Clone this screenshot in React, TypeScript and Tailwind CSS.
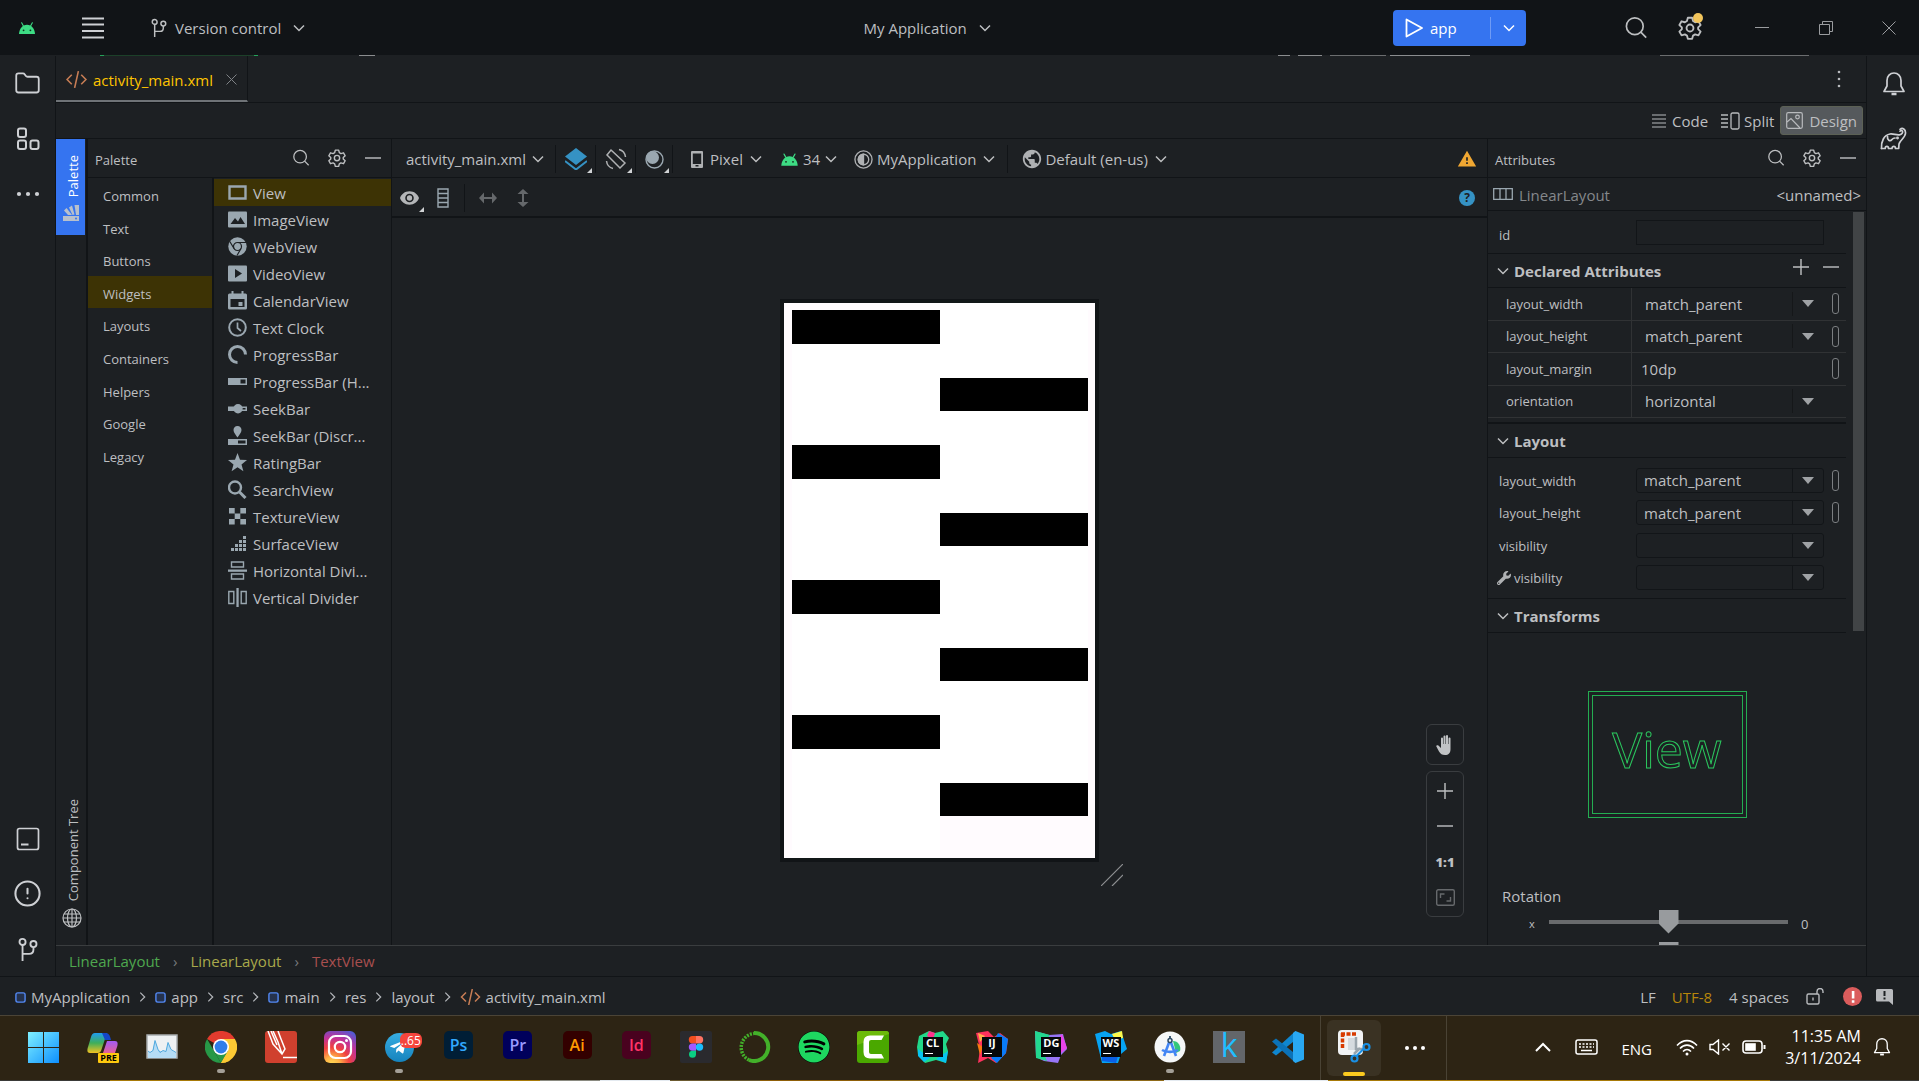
import type { ReactNode } from "react";
import { Folder, CircleAlert } from "lucide-react";
import { MdPublic, MdWarning } from "react-icons/md";
import { FaSpotify, FaWrench, FaTelegramPlane } from "react-icons/fa";

/* ---------- shared icons ---------- */

function Chevron({ className = "w-3 h-3" }: { className?: string }) {
  return (
    <svg viewBox="0 0 12 12" className={className + " shrink-0"} fill="none" stroke="currentColor" strokeWidth="1.5">
      <path d="M1 3.5 6 8.5 11 3.5" />
    </svg>
  );
}

function ChevronRight() {
  return (
    <svg viewBox="0 0 8 12" className="h-3 w-[7px] shrink-0" fill="none" stroke="#b4b7bb" strokeWidth="1.4">
      <path d="M1.5 1 6.5 6 1.5 11" />
    </svg>
  );
}

function Android({ className = "w-4 h-3" }: { className?: string }) {
  return (
    <svg viewBox="0 0 18 13" className={className + " shrink-0"}>
      <path d="M3.2.8 5 4M14.8.8 13 4" stroke="#3ddc84" strokeWidth="1.2" strokeLinecap="round" />
      <path d="M.3 13C.6 7.500 4 3 9 3s8.400 4.500 8.700 10Z" fill="#3ddc84" />
      <circle cx="5.300" cy="9" r="1" fill="#15301f" />
      <circle cx="12.700" cy="9" r="1" fill="#15301f" />
    </svg>
  );
}

function Gear({ className = "w-5 h-5" }: { className?: string }) {
  return (
    <svg viewBox="0 0 24 24" className={className + " shrink-0"} fill="none" stroke="currentColor" strokeWidth="1.7" strokeLinejoin="round">
      <path d="M10 2.500h4l.8 3.100 1.900 1.100 3.100-.9 2 3.500-2.300 2.200v1.600l2.300 2.200-2 3.500-3.100-.9-1.900 1.100-.8 3h-4l-.8-3-1.900-1.100-3.100.9-2-3.500 2.300-2.200v-1.600L2.200 9.300l2-3.500 3.100.9 1.900-1.100z" />
      <circle cx="12" cy="12" r="3.200" />
    </svg>
  );
}

function Magnifier({ className = "w-5 h-5" }: { className?: string }) {
  return (
    <svg viewBox="0 0 20 20" className={className + " shrink-0"} fill="none" stroke="currentColor" strokeWidth="1.4">
      <circle cx="9" cy="8.500" r="7" />
      <path d="m14 13.500 4.500 4.500" />
    </svg>
  );
}

function Branch({ className = "w-4 h-5" }: { className?: string }) {
  return (
    <svg viewBox="0 0 18 22" className={className + " shrink-0"} fill="none" stroke="currentColor" strokeWidth="1.7">
      <circle cx="4" cy="4.500" r="2.800" />
      <circle cx="14" cy="6.500" r="2.800" />
      <path d="M4 7.300V22M14 9.300v2.200c0 2.500-1.500 4-4 4H4" />
    </svg>
  );
}

function Minus() {
  return (
    <svg viewBox="0 0 18 18" className="size-4" stroke="currentColor" strokeWidth="1.6">
      <path d="M0 9h18" />
    </svg>
  );
}

function Plus() {
  return (
    <svg viewBox="0 0 18 18" className="size-4" stroke="currentColor" strokeWidth="1.6">
      <path d="M0 9h18M9 0v18" />
    </svg>
  );
}

function XmlIcon({ className = "w-5 h-4" }: { className?: string }) {
  return (
    <svg viewBox="0 0 20 16" className={className + " shrink-0"} fill="none" stroke="#c77d55" strokeWidth="1.5">
      <path d="M5.500 3.500 1 8l4.500 4.500M14.500 3.500 19 8l-4.500 4.500M11.800 0 8.200 16" />
    </svg>
  );
}

function Bell({ className = "w-6 h-7" }: { className?: string }) {
  return (
    <svg viewBox="0 0 24 26" className={className + " shrink-0"} fill="none" stroke="currentColor" strokeWidth="1.7" strokeLinejoin="round">
      <path d="M5 9.500C5 5 8 2 12 2s7 3 7 7.500V15l3 5.500H2L5 15z" />
      <path d="M9.500 23h5" strokeWidth="2.500" />
    </svg>
  );
}

function Corner() {
  return (
    <svg viewBox="0 0 5 5" className="size-[5px] self-end" fill="#d0d2d4">
      <path d="M5 0v5H0z" />
    </svg>
  );
}

function Sep() {
  return <span className="h-7 w-px bg-[#111417]" />;
}

/* ---------- title bar ---------- */

function TitleBar() {
  return (
    <header className="grid h-[55px] grid-cols-[45%_1fr_auto] items-center bg-[#111417]">
      <div className="flex items-center pl-[18px]">
        <Android className="h-3 w-[18px]" />
        <button aria-label="Main menu" className="ml-[46px]">
          <svg viewBox="0 0 22 22" className="size-[22px]" stroke="#ced0d4" strokeWidth="1.8">
            <path d="M0 1.500h22M0 7.500h22M0 14h22M0 20.500h22" />
          </svg>
        </button>
        <button className="ml-[47px] flex items-center">
          <Branch className="h-[19px] w-4" />
          <span className="ml-2">Version control</span>
          <Chevron className="ml-3 size-3" />
        </button>
      </div>
      <button className="flex items-center justify-self-start">
        My Application
        <Chevron className="ml-3 size-3" />
      </button>
      <div className="flex items-center">
        <div className="flex h-9 w-[133px] items-center rounded bg-[#3574f0] text-white">
          <button className="flex flex-1 items-center pl-3">
            <svg viewBox="0 0 18 20" className="h-5 w-[18px]" fill="none" stroke="white" strokeWidth="1.8" strokeLinejoin="round">
              <path d="M1.500 1.500 17 10 1.500 18.500z" />
            </svg>
            <span className="ml-[7px]">app</span>
          </button>
          <span className="h-[22px] w-px bg-[#6f9bf5]" />
          <button aria-label="Run options" className="flex h-full w-[35px] items-center justify-center">
            <Chevron className="size-3" />
          </button>
        </div>
        <button aria-label="Search everywhere" className="ml-[98px]">
          <Magnifier className="size-6" />
        </button>
        <button aria-label="Settings" className="relative ml-[29px]">
          <Gear className="size-[26px]" />
          <span className="absolute -top-[2px] right-0 size-[10px] rounded-full bg-[#f2c55c]" />
        </button>
        <button aria-label="Minimize" className="ml-[52px] h-px w-[14px] bg-[#9a9c9f]" />
        <button aria-label="Restore" className="ml-[50px]">
          <svg viewBox="0 0 14 14" className="size-[14px]" fill="none" stroke="#9a9c9f">
            <path d="M.5 3.500h10v10H.5zM3.500 3.500v-3h10v10h-3" />
          </svg>
        </button>
        <button aria-label="Close" className="mr-[23px] ml-[49px]">
          <svg viewBox="0 0 14 14" className="size-[14px]" stroke="#9a9c9f">
            <path d="M.5.5l13 13M13.500.5l-13 13" />
          </svg>
        </button>
      </div>
    </header>
  );
}

/* Sliver of the run toolbar showing below the title bar */
function ToolbarSliver() {
  return (
    <div className="flex h-px bg-[#1d2023]">
      <span className="ml-[100px] w-1 bg-[#25a25a]" />
      <span className="w-[150px] bg-[#1c4029]" />
      <span className="w-1 bg-[#25a25a]" />
      <span className="ml-[101px] w-4 bg-[#8b8d8f]" />
      <span className="mr-2 ml-auto w-3 bg-[#8b8d8f]" />
      <span className="mr-2 w-6 bg-[#8b8d8f]" />
      <span className="mr-1 w-14 bg-[#6b6d6f]" />
      <span className="mr-[190px] w-20 bg-[#8b8d8f]" />
      <span className="mr-[110px] w-[149px] bg-[#6b6d6f]" />
    </div>
  );
}

/* ---------- side stripes ---------- */

function StripeButton({ label, children }: { label: string; children: ReactNode }) {
  return (
    <button aria-label={label} className="flex h-[55px] w-full items-center justify-center">
      {children}
    </button>
  );
}

function LeftStripe() {
  return (
    <nav className="flex w-14 shrink-0 flex-col border-r border-[#111417] text-[#ced0d4]">
      <StripeButton label="Project">
        <Folder className="size-[27px]" strokeWidth={1.6} />
      </StripeButton>
      <StripeButton label="Resource manager">
        <svg viewBox="0 0 24 24" className="size-6" fill="none" stroke="currentColor" strokeWidth="2">
          <rect x="2" y="1.500" width="8" height="8.500" rx="2" />
          <rect x="2" y="13.500" width="8" height="8.500" rx="2" />
          <rect x="14.500" y="13.500" width="8" height="8.500" rx="2" />
        </svg>
      </StripeButton>
      <StripeButton label="More tool windows">
        <svg viewBox="0 0 24 6" className="h-[6px] w-6" fill="currentColor">
          <circle cx="3" cy="3" r="2.100" />
          <circle cx="12" cy="3" r="2.100" />
          <circle cx="21" cy="3" r="2.100" />
        </svg>
      </StripeButton>
      <span className="flex-1" />
      <StripeButton label="Terminal">
        <svg viewBox="0 0 24 24" className="size-6" fill="none" stroke="currentColor" strokeWidth="1.700">
          <rect x="1.500" y="1.500" width="21" height="21" rx="2" />
          <path d="M5 17.500h7.500" strokeWidth="2" />
        </svg>
      </StripeButton>
      <StripeButton label="Problems">
        <CircleAlert className="size-[29px]" strokeWidth={1.7} />
      </StripeButton>
      <StripeButton label="Version control">
        <Branch className="h-6 w-[22px]" />
      </StripeButton>
    </nav>
  );
}

function RightStripe() {
  return (
    <nav className="flex w-[53px] shrink-0 flex-col border-l border-[#111417] pl-px text-[#ced0d4]">
      <StripeButton label="Notifications">
        <Bell className="h-[26px] w-6" />
      </StripeButton>
      <StripeButton label="Gradle">
        <svg viewBox="0 0 27 24" className="h-6 w-[27px]" fill="none" stroke="currentColor" strokeWidth="1.700" strokeLinejoin="round" strokeLinecap="round">
          <path d="M1.500 21.500C1 14.500 4 8 10 7c3.500-.5 6 1.300 9.500.8 2.500-.4 3.800-2.300 2.800-3.700-.7-1-2-.7-2.300.1" />
          <path d="M20 2.300c2.500-2 5.800-.3 5.500 4-.3 4.500-5.500 7-6.500 10.700l-.3 4.500h-3.200c0-2.800-3.500-2.800-3.500 0H8.500c0-2.800-3.300-2.800-3.300 0H1.500" />
          <path d="M7.500 9.500c-.5 3.500 2.500 5.500 4.500 3 .8-1 1.500-1.500 3-1.500" />
          <circle cx="17.500" cy="11" r=".6" fill="currentColor" />
        </svg>
      </StripeButton>
    </nav>
  );
}

/* ---------- editor header ---------- */

function EditorHeader() {
  return (
    <>
      <div className="flex h-[47px] border-b border-[#111417]">
        <div className="flex w-48 items-center border-r border-b-2 border-r-[#111417] border-b-[#6f7377] pt-[2px] pl-[10px]">
          <XmlIcon className="h-[17px] w-[21px]" />
          <span className="ml-[6px] pt-px text-[#ffc400]">activity_main.xml</span>
          <button aria-label="Close tab" className="ml-[13px]">
            <svg viewBox="0 0 11 11" className="size-[11px]" stroke="#7f8286">
              <path d="M.5.5l10 10M10.500.5l-10 10" />
            </svg>
          </button>
        </div>
        <button aria-label="Tab options" className="mr-[25px] ml-auto">
          <svg viewBox="0 0 4 18" className="h-[18px] w-1" fill="#b8babd">
            <circle cx="2" cy="2" r="1.300" />
            <circle cx="2" cy="9" r="1.300" />
            <circle cx="2" cy="16" r="1.300" />
          </svg>
        </button>
      </div>
      <div className="flex h-9 items-center justify-end border-b border-[#111417] pr-[3px]">
        <button className="flex items-center gap-[6px]">
          <svg viewBox="0 0 14 14" className="size-[14px]" stroke="#b8babd" strokeWidth="1.200">
            <path d="M0 1h14M0 5h14M0 9h14M0 13h14" />
          </svg>
          Code
        </button>
        <button className="ml-[13px] flex items-center gap-1">
          <svg viewBox="0 0 19 18" className="h-[18px] w-[19px]" fill="none" stroke="#b8babd" strokeWidth="1.300">
            <path d="M0 3h7M0 7h7M0 11h7M0 15h7" />
            <rect x="10" y="1" width="8" height="16" rx="1.500" />
          </svg>
          Split
        </button>
        <button className="ml-[6px] flex h-[29px] items-center gap-[6px] rounded-[3px] border border-[#5c6155] bg-[#55595c] px-[5px]">
          <svg viewBox="0 0 17 17" className="size-[17px]" fill="none" stroke="#b8babd" strokeWidth="1.200">
            <rect x=".7" y=".7" width="15.600" height="15.600" rx="1.500" />
            <circle cx="11.500" cy="5" r="1.800" />
            <path d="m1 10 4-3.500 9 9.500" />
          </svg>
          Design
        </button>
      </div>
    </>
  );
}

/* ---------- palette ---------- */

function PanelHeader({ title }: { title: string }) {
  return (
    <div className="flex h-[39px] shrink-0 items-center border-b border-[#111417]">
      <h2 className="flex-1 pt-[3px] pl-[7px] text-[13px]">{title}</h2>
      <button aria-label={"Search " + title} className="flex w-9 justify-center">
        <Magnifier className="size-[18px]" />
      </button>
      <button aria-label={title + " settings"} className="flex w-9 justify-center">
        <Gear className="size-5" />
      </button>
      <button aria-label={"Hide " + title} className="flex w-9 justify-center">
        <Minus />
      </button>
    </div>
  );
}

const categories = ["Common", "Text", "Buttons", "Widgets", "Layouts", "Containers", "Helpers", "Google", "Legacy"];

const widgets: { name: string; icon: ReactNode }[] = [
  { name: "View", icon: <path d="M1.500 3.500h16v12h-16z" fill="none" stroke="#9aa7b0" strokeWidth="2.400" /> },
  {
    name: "ImageView",
    icon: (
      <>
        <rect y="1.500" width="19" height="16" rx="1" />
        <path d="M2.500 14 7 8l3 3.500L12.500 7l4.500 7z" fill="#1d2023" />
      </>
    ),
  },
  {
    name: "WebView",
    icon: (
      <>
        <circle cx="9.500" cy="9.500" r="9.200" />
        <g stroke="#1d2023" fill="none" strokeWidth="1.200">
          <circle cx="9.500" cy="9.500" r="4" />
          <path d="M9.500 5.500H18M6 11.500 1.800 4.500M13 11.500 9 18.500" />
        </g>
      </>
    ),
  },
  {
    name: "VideoView",
    icon: (
      <>
        <rect y="1.500" width="19" height="16" rx="1" />
        <path d="M7 5v9l7-4.500z" fill="#1d2023" />
      </>
    ),
  },
  {
    name: "CalendarView",
    icon: (
      <>
        <path d="M1.500 2.500h16q1.500 0 1.500 1.500v13q0 1.500-1.500 1.500h-16Q0 18.500 0 17V4q0-1.500 1.500-1.500zM2.500 8v8h14V8z" fillRule="evenodd" />
        <path d="M3.500 0h2v4h-2zM13.500 0h2v4h-2zM10.500 11h4v4h-4z" />
      </>
    ),
  },
  {
    name: "Text Clock",
    icon: (
      <g fill="none" stroke="#9aa7b0" strokeWidth="2">
        <circle cx="9.500" cy="9.500" r="8.300" />
        <path d="M9.500 4.500v5.500l3.500 3" strokeWidth="1.700" />
      </g>
    ),
  },
  { name: "ProgressBar", icon: <path d="M9.500 17.500A8 8 0 1 1 17.500 9.500" fill="none" stroke="#9aa7b0" strokeWidth="3" /> },
  { name: "ProgressBar (H...", icon: <path d="M0 6h19v7H0zM12.500 7.500v4h5v-4z" fillRule="evenodd" /> },
  {
    name: "SeekBar",
    icon: (
      <>
        <path d="M0 7.500h10v4.500H0zM10 7.500h9v4.500h-9zM13 9v1.500h4.500V9z" fillRule="evenodd" />
        <circle cx="10" cy="9.700" r="4.700" />
      </>
    ),
  },
  {
    name: "SeekBar (Discr...",
    icon: (
      <>
        <path d="M9.500 0c2.500 0 4 1.800 4 4 0 2.500-2.500 5-4 7.500C8 9 5.500 6.500 5.500 4c0-2.200 1.500-4 4-4z" />
        <path d="M0 13h19v6H0zM10 14.500v3h7.500v-3z" fillRule="evenodd" />
      </>
    ),
  },
  { name: "RatingBar", icon: <path d="m9.500 0 2.500 6.700 7 .3-5.500 4.400 1.900 6.900-5.900-4-5.900 4 1.900-6.900L0 7l7-.3z" /> },
  {
    name: "SearchView",
    icon: (
      <g fill="none" stroke="#9aa7b0" strokeWidth="2.400">
        <circle cx="7" cy="7.500" r="6" />
        <path d="m11.500 12 6 6" strokeWidth="3" />
      </g>
    ),
  },
  { name: "TextureView", icon: <path d="M1 1h5.700v5.500H1zM12.300 1H18v5.500h-5.700zM6.700 6.500h5.600V12H6.700zM1 12h5.700v5.500H1zM12.300 12H18v5.500h-5.700z" /> },
  {
    name: "SurfaceView",
    icon: <path d="M15 2h3v3h-3zM15 6h3v3h-3zM11 6h3v3h-3zM15 10h3v3h-3zM11 10h3v3h-3zM7 10h3v3H7zM15 14h3v3h-3zM11 14h3v3h-3zM7 14h3v3H7zM3 14h3v3H3z" />,
  },
  {
    name: "Horizontal Divi...",
    icon: (
      <>
        <path d="M3.500 1h12v5h-12zM3.500 13h12v5h-12z" fill="none" stroke="#9aa7b0" strokeWidth="1.400" />
        <path d="M0 8.500h19v2.300H0z" />
      </>
    ),
  },
  {
    name: "Vertical Divider",
    icon: (
      <>
        <path d="M.8 3.500h5v12h-5zM13.200 3.500h5v12h-5z" fill="none" stroke="#9aa7b0" strokeWidth="1.400" />
        <path d="M8.400 0h2.300v19H8.400z" />
      </>
    ),
  },
];

function Palette() {
  return (
    <>
      <div className="flex w-8 shrink-0 flex-col items-start border-r-2 border-[#111417]">
        <button className="flex h-24 w-[29px] flex-col items-center justify-end gap-2 bg-[#3574f0] pb-[14px] pl-1 text-white">
          <span className="rotate-180 text-[13px] leading-4 [writing-mode:vertical-rl]">Palette</span>
          <svg viewBox="0 0 16 16" className="mr-1 size-4" fill="#b8c0cc">
            <path d="M0 11h16v5H0z" />
            <path d="M1 5.500 3.500 3 9 10H5z" />
            <path d="M6 2.500 9 .500 11.500 9.500 9.500 10z" />
            <path d="M11.500 0H16v10h-3z" />
            <circle cx="13" cy="13.500" r="1" fill="#3574f0" />
          </svg>
        </button>
        <span className="flex-1" />
        <button className="mb-[17px] flex w-[29px] flex-col items-center gap-[7px] pl-1">
          <span className="rotate-180 text-[13px] leading-4 [writing-mode:vertical-rl]">Component Tree</span>
          <svg viewBox="0 0 20 20" className="mr-[2px] size-5" fill="none" stroke="currentColor" strokeWidth="1.200">
            <circle cx="10" cy="10" r="9" />
            <ellipse cx="10" cy="10" rx="4.500" ry="9" />
            <path d="M10 1v18M2 6h16M1 10h18M2 14h16" />
          </svg>
        </button>
      </div>
      <section className="flex w-[304px] shrink-0 flex-col border-r border-[#111417]">
        <PanelHeader title="Palette" />
        <div className="flex flex-1">
          <div className="w-[126px] shrink-0 border-r-2 border-[#111417] text-[13px]">
            <ul className="grid h-[293px] grid-rows-9">
              {categories.map((c) => (
                <li key={c} className={c === "Widgets" ? "bg-[#3d3305]" : ""}>
                  <button className="h-full w-full pt-1 pl-[15px] text-left">{c}</button>
                </li>
              ))}
            </ul>
          </div>
          <ul className="flex-1 pt-px">
            {widgets.map((w) => (
              <li key={w.name}>
                <button className={"flex h-[27px] w-full items-center gap-[6px] pl-[14px] " + (w.name === "View" ? "bg-[#3d3305]" : "")}>
                  <svg viewBox="0 0 19 19" className="size-[19px] shrink-0" fill="#9aa7b0">
                    {w.icon}
                  </svg>
                  <span className="whitespace-nowrap">{w.name}</span>
                </button>
              </li>
            ))}
          </ul>
        </div>
      </section>
    </>
  );
}

/* ---------- design surface ---------- */

function SurfaceToolbar() {
  return (
    <div className="flex h-[39px] shrink-0 items-center border-b border-[#111417] pt-[2px] pl-[14px]">
      <button className="flex items-center gap-[6px]">
        activity_main.xml
        <Chevron />
      </button>
      <span className="w-[11px]" />
      <Sep />
      <button aria-label="Design surface mode" className="ml-[9px] flex h-7 items-center">
        <svg viewBox="0 0 22 22" className="size-[22px]" fill="#3592c4">
          <path d="M11 0 22 8.500 11 17 0 8.500z" />
          <path d="M0 13 11 21.500 22 13" fill="none" stroke="#3592c4" strokeWidth="2" />
        </svg>
        <Corner />
      </button>
      <span className="w-[3px]" />
      <Sep />
      <button aria-label="Orientation" className="ml-[9px] flex h-7 items-center">
        <svg viewBox="0 0 22 22" className="size-[22px]" fill="none" stroke="#afb1b3" strokeWidth="1.500">
          <path d="m6 2 14 13-5 5L2 7zM14 1.500c4 1 6 3.500 6.500 7.500M8 20.500c-4-1-6-3.500-6.500-7.500" />
        </svg>
        <Corner />
      </button>
      <span className="w-[3px]" />
      <Sep />
      <button aria-label="Night mode" className="ml-[9px] flex h-7 items-center">
        <svg viewBox="0 0 19 19" className="size-[19px]">
          <circle cx="9.500" cy="9.500" r="8.500" fill="none" stroke="#9aa7b0" strokeWidth="1.400" />
          <circle cx="7.500" cy="7.500" r="6.500" fill="#9aa7b0" />
        </svg>
        <Corner />
      </button>
      <span className="w-[3px]" />
      <Sep />
      <button className="ml-[18px] flex items-center">
        <svg viewBox="0 0 12 17" className="h-[17px] w-3" fill="#afb1b3">
          <path d="M1 0h10q1 0 1 1v15q0 1-1 1H1q-1 0-1-1V1q0-1 1-1zM1.800 2.500V13h8.400V2.500zM4.500 14v1.500h3V14z" fillRule="evenodd" />
        </svg>
        <span className="mx-[7px]">Pixel</span>
        <Chevron />
      </button>
      <button className="ml-[19px] flex items-center">
        <Android className="h-[13px] w-[17px]" />
        <span className="mx-[5px]">34</span>
        <Chevron />
      </button>
      <button className="ml-[17px] flex items-center">
        <svg viewBox="0 0 20 20" className="size-[19px]" fill="none" stroke="#afb1b3" strokeWidth="1.400">
          <circle cx="10" cy="10" r="9" />
          <circle cx="10" cy="10" r="5.500" />
          <path d="M10 4.500a5.500 5.500 0 0 0 0 11z" fill="#afb1b3" />
        </svg>
        <span className="mr-[7px] ml-1">MyApplication</span>
        <Chevron />
      </button>
      <span className="w-3" />
      <Sep />
      <button className="ml-[13px] flex items-center">
        <MdPublic className="size-[22px] text-[#afb1b3]" />
        <span className="mr-[7px] ml-[2px]">Default (en-us)</span>
        <Chevron />
      </button>
      <MdWarning className="mr-[10px] ml-auto size-5 text-[#f0a732]" />
    </div>
  );
}

function SurfaceTools() {
  return (
    <div className="flex h-10 shrink-0 items-center border-b-2 border-[#111417] pt-[2px] pl-2">
      <button aria-label="View options" className="flex h-7 items-center">
        <svg viewBox="0 0 20 16" className="h-4 w-[19px]" fill="#b4b6b8">
          <path d="M10 1c5 0 8.500 3 10 7-1.500 4-5 7-10 7S1.500 12 0 8c1.500-4 5-7 10-7zm0 2.500a4.500 4.500 0 1 0 0 9 4.500 4.500 0 0 0 0-9z" fillRule="evenodd" />
          <circle cx="10" cy="8" r="2.800" />
        </svg>
        <Corner />
      </button>
      <svg viewBox="0 0 12 20" className="ml-[13px] h-5 w-3" fill="none" stroke="#9aa7b0" strokeWidth="1.400">
        <path d="M1 1h10v18H1zM1 5.500h10M1 14.500h10M1 10h10" />
      </svg>
      <span className="w-[15px]" />
      <Sep />
      <svg viewBox="0 0 18 12" className="ml-[14px] h-3 w-[18px]" fill="#65686b">
        <path d="M0 6 5 .5V5h8V.5L18 6l-5 5.500V7H5v4.500z" />
      </svg>
      <svg viewBox="0 0 12 18" className="ml-5 h-[18px] w-3" fill="#65686b">
        <path d="M6 0l5.500 5H7v8h4.500L6 18 .5 13H5V5H.5z" />
      </svg>
      <span className="mr-3 ml-auto flex size-4 items-center justify-center rounded-full bg-[#3592c4] text-xs font-bold text-[#1d2023]">?</span>
    </div>
  );
}

function Device() {
  const rows = Array.from({ length: 16 }, (_, i) => i);
  return (
    <div className="relative h-[555px] w-[311px] bg-[#fffbfe] pt-[7px] pr-[7px] pb-2 pl-2 shadow-[0_0_0_4px_#111417]">
      <div className="grid h-full grid-cols-2">
        <div className="grid grid-rows-16">
          {rows.map((r) => (
            <span key={r} className={r % 4 === 0 ? "bg-black" : "bg-white"} />
          ))}
        </div>
        <div className="grid grid-rows-16">
          {rows.map((r) => (
            <span key={r} className={r === 15 ? "bg-[#fffbfe]" : r % 4 === 2 ? "bg-black" : "bg-white"} />
          ))}
        </div>
      </div>
      <svg viewBox="0 0 22 22" className="absolute top-full left-full mt-[6px] ml-[6px] size-[22px]" stroke="#8d8f91" strokeWidth="1.200">
        <path d="M0 22 22 0M11 22 22 11" />
      </svg>
    </div>
  );
}

function ZoomControls() {
  return (
    <div className="absolute right-[23px] bottom-7 flex w-[38px] flex-col gap-[6px]">
      <button aria-label="Pan" className="flex h-[41px] items-center justify-center rounded-md border border-[#3a3d40]">
        <svg viewBox="0 0 18 20" className="h-5 w-[18px]" fill="#c0c2c4">
          <path d="M5 10V3.500q0-1 1-1t1 1V9h.5V1.500q0-1 1-1t1 1V9h.5V1q0-1 1-1t1 1v8h.5V3.500q0-1 1-1t1 1V14c0 4-2 6-5.500 6-3 0-4.500-1-6-3.500L.5 11.800c-.8-1.200.8-2.300 1.900-1.200L5 13z" />
        </svg>
      </button>
      <div className="flex h-[146px] flex-col rounded-md border border-[#3a3d40] py-px">
        <button aria-label="Zoom in" className="flex flex-1 items-center justify-center">
          <Plus />
        </button>
        <button aria-label="Zoom out" className="flex flex-1 items-center justify-center">
          <Minus />
        </button>
        <button className="flex-1 text-[13px] font-extrabold">1:1</button>
        <button aria-label="Zoom to fit" className="flex flex-1 items-center justify-center">
          <svg viewBox="0 0 19 17" className="h-[17px] w-[19px]" fill="none" stroke="#66696c" strokeWidth="1.400">
            <rect x=".7" y=".7" width="17.600" height="15.600" rx="1.500" />
            <path d="M4.500 9V5h4M14.500 8v4h-4" />
          </svg>
        </button>
      </div>
    </div>
  );
}

function Surface() {
  return (
    <main className="flex min-w-0 flex-1 flex-col">
      <SurfaceToolbar />
      <SurfaceTools />
      <div className="relative flex flex-1 items-center justify-center pb-[2px]">
        <Device />
        <ZoomControls />
      </div>
    </main>
  );
}

/* ---------- attributes ---------- */

function Triangle() {
  return (
    <svg viewBox="0 0 12 7" className="h-[7px] w-3" fill="#9fa2a5">
      <path d="M0 0h12L6 7z" />
    </svg>
  );
}

function Pill() {
  return <button aria-label="Pick a resource" className="h-[21px] w-[7px] rounded-[3px] border border-[#7b7e81]" />;
}

function DeclaredRow({ name, value, list = true, pill = true }: { name: string; value: string; list?: boolean; pill?: boolean }) {
  return (
    <div className="grid grid-cols-[144px_161px_30px_1fr] items-center border-b border-[#303234]">
      <label htmlFor={"declared-" + name} className="flex h-full items-center border-r border-[#303234] pl-[18px] text-[13px]">
        {name}
      </label>
      {list ? (
        <>
          <select id={"declared-" + name} className="h-6 appearance-none border-r border-[#151719] pl-[13px] outline-none">
            <option>{value}</option>
          </select>
          <span className="flex justify-center">
            <Triangle />
          </span>
        </>
      ) : (
        <input id={"declared-" + name} defaultValue={value} className="col-span-2 w-full pl-[9px] outline-none" />
      )}
      <span className="flex pl-[9px]">{pill && <Pill />}</span>
    </div>
  );
}

function FieldRow({ id, name, value, pill, tool }: { id: string; name: string; value: string; pill?: boolean; tool?: boolean }) {
  return (
    <div className="flex items-center">
      <label htmlFor={id} className="flex w-[148px] items-center gap-[3px] pt-px pl-[11px] text-[13px]">
        {tool && <FaWrench className="-ml-[2px] size-[14px] text-[#afb1b3]" />}
        {name}
      </label>
      <div className="flex h-[25px] w-[188px] items-center rounded-[3px] border border-[#121518]">
        <select id={id} className="h-full flex-1 appearance-none border-r border-[#121518] pl-[7px] outline-none">
          <option>{value}</option>
        </select>
        <span className="flex w-[30px] justify-center">
          <Triangle />
        </span>
      </div>
      <span className="flex pl-2">{pill && <Pill />}</span>
    </div>
  );
}

function SectionTitle({ children }: { children: ReactNode }) {
  return (
    <h3 className="flex flex-1 items-center gap-[5px] pt-px pl-[9px] font-bold">
      <Chevron className="size-3" />
      {children}
    </h3>
  );
}

const sliderClass =
  "h-6 w-[239px] appearance-none bg-transparent [&::-webkit-slider-runnable-track]:h-1 [&::-webkit-slider-runnable-track]:bg-[#696b6d] [&::-webkit-slider-thumb]:-mt-[10px] [&::-webkit-slider-thumb]:h-6 [&::-webkit-slider-thumb]:w-5 [&::-webkit-slider-thumb]:appearance-none [&::-webkit-slider-thumb]:bg-[#989b9e] [&::-webkit-slider-thumb]:[clip-path:polygon(0_0,100%_0,100%_58%,50%_100%,0_58%)]";

function Attributes() {
  return (
    <aside className="flex w-[379px] shrink-0 flex-col border-l border-[#111417]">
      <PanelHeader title="Attributes" />
      <div className="flex h-[33px] shrink-0 items-center border-b border-[#111417] pt-[2px] pr-[5px] pl-[5px]">
        <svg viewBox="0 0 20 12" className="mb-[3px] h-3 w-5" fill="none" stroke="#9aa7b0" strokeWidth="1.300">
          <path d="M.7.7h18.600v10.600H.7zM7 .7v10.600M13 .7v10.600" />
        </svg>
        <span className="ml-[6px] flex-1 text-[#85888b]">LinearLayout</span>
        <span>&lt;unnamed&gt;</span>
      </div>
      <div className="flex min-h-0 flex-1">
        <div className="flex min-w-0 flex-1 flex-col">
          <div className="flex h-[43px] shrink-0 items-center border-b border-[#111417]">
            <label htmlFor="attr-id" className="w-[148px] pt-[6px] pl-[11px] text-[13px]">
              id
            </label>
            <input id="attr-id" className="h-[25px] w-[188px] border border-[#121518] px-2 outline-none" />
          </div>
          <div className="flex h-[34px] shrink-0 items-center border-b border-[#111417] pr-[7px]">
            <SectionTitle>Declared Attributes</SectionTitle>
            <button aria-label="Add attribute" className="mr-[14px] mb-2">
              <Plus />
            </button>
            <button aria-label="Remove attribute" className="mb-2">
              <Minus />
            </button>
          </div>
          <div className="grid h-[130px] shrink-0 grid-rows-4">
            <DeclaredRow name="layout_width" value="match_parent" />
            <DeclaredRow name="layout_height" value="match_parent" />
            <DeclaredRow name="layout_margin" value="10dp" list={false} />
            <DeclaredRow name="orientation" value="horizontal" pill={false} />
          </div>
          <div className="mt-1 flex h-9 shrink-0 items-center border-t-2 border-b border-[#111417]">
            <SectionTitle>Layout</SectionTitle>
          </div>
          <div className="grid h-[141px] shrink-0 grid-rows-4 border-b border-[#111417] pt-[6px] pb-1">
            <FieldRow id="layout-width" name="layout_width" value="match_parent" pill />
            <FieldRow id="layout-height" name="layout_height" value="match_parent" pill />
            <FieldRow id="visibility" name="visibility" value="" />
            <FieldRow id="tools-visibility" name="visibility" value="" tool />
          </div>
          <div className="flex h-[34px] shrink-0 items-center border-b border-[#111417]">
            <SectionTitle>Transforms</SectionTitle>
          </div>
          <div className="mt-[58px] flex shrink-0 justify-center">
            <div className="h-[127px] w-[159px] border border-[#24ad51] p-[3px]">
              <div className="flex h-full items-center justify-center border border-[#24ad51] pb-3 text-[50px] leading-none font-normal text-transparent [-webkit-text-stroke:1px_#2bc75e]">
                View
              </div>
            </div>
          </div>
          <p className="mt-[68px] pl-[14px]">Rotation</p>
          <div className="mt-[2px] h-[37px] overflow-hidden">
            <div className="flex h-[27px] items-center">
              <label htmlFor="rotation-x" className="w-[61px] shrink-0 pt-1 pl-[41px] text-[11px]">
                x
              </label>
              <input id="rotation-x" type="range" min={-360} max={360} defaultValue={0} className={sliderClass} />
              <output htmlFor="rotation-x" className="pt-1 pl-[13px] text-[13px]">
                0
              </output>
            </div>
            <input aria-label="Rotation y" type="range" min={-360} max={360} defaultValue={0} className={"mt-[7px] ml-[61px] block " + sliderClass} />
          </div>
        </div>
        <div className="w-5 shrink-0 pt-px pl-[7px]">
          <div className="h-[419px] w-[11px] bg-[#414446]" />
        </div>
      </div>
    </aside>
  );
}

/* ---------- bottom bars ---------- */

function Module({ children }: { children: ReactNode }) {
  return (
    <span className="flex items-center gap-[5px]">
      <svg viewBox="0 0 12 12" className="mt-px size-[11px]">
        <rect x="1" y="1" width="10" height="10" rx="2" fill="#25324d" stroke="#548af7" strokeWidth="1.500" />
      </svg>
      {children}
    </span>
  );
}

function StatusBar() {
  return (
    <footer className="flex h-[39px] shrink-0 items-center border-t border-[#111417] pt-px pr-[26px] pl-[15px]">
      <nav className="flex items-center gap-[9px]">
        <Module>MyApplication</Module>
        <ChevronRight />
        <Module>app</Module>
        <ChevronRight />
        <span>src</span>
        <ChevronRight />
        <Module>main</Module>
        <ChevronRight />
        <span>res</span>
        <ChevronRight />
        <span>layout</span>
        <ChevronRight />
        <span className="flex items-center gap-[5px]">
          <XmlIcon className="h-4 w-[21px]" />
          activity_main.xml
        </span>
      </nav>
      <span className="ml-auto">LF</span>
      <span className="ml-4 text-[#b8860b]">UTF-8</span>
      <span className="ml-[17px]">4 spaces</span>
      <svg viewBox="0 0 18 17" className="ml-[17px] h-[17px] w-[18px]" fill="none" stroke="#b8babd" strokeWidth="1.400">
        <rect x="1" y="6" width="12" height="10" rx="1.500" />
        <path d="M11 6V3.500a3 3 0 0 1 6 0V5M7 9.500v3" />
      </svg>
      <span className="ml-[19px] flex size-[19px] items-center justify-center rounded-full bg-[#db5c5c]">
        <svg viewBox="0 0 4 12" className="h-3 w-1" fill="white">
          <path d="M.8 0h2.600v7.500H.8zM.8 9.200h2.600v2.600H.8z" />
        </svg>
      </span>
      <svg viewBox="0 0 17 16" className="ml-[14px] h-4 w-[17px]" fill="#b8babd">
        <path d="M1.500 0h14Q17 0 17 1.500V16l-4-3.500H1.500Q0 12.500 0 11V1.500Q0 0 1.500 0zM7.500 2v5h2V2zM7.500 8.500v2h2v-2z" fillRule="evenodd" />
      </svg>
    </footer>
  );
}

/* ---------- Windows taskbar ---------- */

function Tile({ bg, fg, children }: { bg: string; fg: string; children: ReactNode }) {
  return <span className={"mb-1 flex h-7 w-[29px] items-center justify-center rounded-[5px] text-base font-semibold " + bg + " " + fg}>{children}</span>;
}

function JetBrains({ code, children }: { code: string; children: ReactNode }) {
  return (
    <span className="relative flex size-8 items-center justify-center">
      <svg viewBox="0 0 32 32" className="absolute inset-0 size-8">
        {children}
      </svg>
      <span className="relative flex size-5 flex-col justify-between bg-[#06080a] px-[2px] pb-[3px] text-[11px] leading-3 font-bold text-white">
        {code}
        <span className="h-px w-2 bg-white" />
      </span>
    </span>
  );
}

const apps: { name: string; running?: boolean; icon: ReactNode }[] = [
  {
    name: "Start",
    icon: (
      <svg viewBox="0 0 31 31" className="size-[31px]">
        <defs>
          <linearGradient id="win" x1="0" y1="0" x2="1" y2="1">
            <stop offset="0" stopColor="#7ff0ff" />
            <stop offset="1" stopColor="#0d8fff" />
          </linearGradient>
        </defs>
        <path d="M0 0h15v15H0zM16 0h15v15H16zM0 16h15v15H0zM16 16h15v15H16z" fill="url(#win)" />
      </svg>
    ),
  },
  {
    name: "Copilot",
    icon: (
      <span className="relative block size-8">
        <svg viewBox="0 0 32 32" className="size-8">
          <defs>
            <linearGradient id="cop1" x1="0" y1="0" x2="0" y2="1">
              <stop offset="0" stopColor="#1f9df0" />
              <stop offset=".5" stopColor="#3fae5a" />
              <stop offset="1" stopColor="#f3c220" />
            </linearGradient>
            <linearGradient id="cop2" x1="0" y1="0" x2="0" y2="1">
              <stop offset="0" stopColor="#a35bf5" />
              <stop offset="1" stopColor="#f5627e" />
            </linearGradient>
          </defs>
          <path d="M8 2h12l-6 18q-1 2-3 2H3c-3 0-3-3-2-6L4 6q1-4 4-4z" fill="url(#cop1)" />
          <path d="M15 2h4c3 0 4 3 5 7h-6z" fill="#1446c8" />
          <path d="M20 10h8c3 0 3 3 2 6l-3 9H15z" fill="url(#cop2)" />
        </svg>
        <span className="absolute right-0 bottom-0 rounded-[1px] bg-[#ffc90e] px-[2px] text-[9px] leading-[10px] font-bold text-black">PRE</span>
      </span>
    ),
  },
  {
    name: "Performance monitor",
    icon: (
      <svg viewBox="0 0 32 26" className="h-[26px] w-8">
        <rect x="1" y="1" width="30" height="23" fill="#eef1f3" stroke="#a9adb0" strokeWidth="1.500" />
        <path d="M2 18h4l3-11 3 8 2 2h6l2-9 3 8 5 3v5H2z" fill="#b5dcf5" />
        <path d="M2 17l2 1.500 3-2 2-10 3 9 2 3 3-2 3 1 2-9 3 7 5 3" fill="none" stroke="#4fa8de" />
      </svg>
    ),
  },
  {
    name: "Chrome",
    running: true,
    icon: (
      <svg viewBox="0 0 32 32" className="size-8">
        <path d="M16 16 2.100 8A16 16 0 0 1 29.900 8z" fill="#e33b2e" />
        <path d="M16 8h13.900A16 16 0 0 1 16 32l6.900-12z" fill="#fcc934" />
        <path d="M9.100 20 16 32A16 16 0 0 1 2.100 8z" fill="#279847" />
        <path d="M9 20 16 32l7-12z" fill="#279847" />
        <path d="M22.900 20 16 32a16 16 0 0 0 8-2l4-14z" fill="#fcc934" />
        <circle cx="16" cy="16" r="8" fill="white" />
        <circle cx="16" cy="16" r="6.400" fill="#2f7de9" />
      </svg>
    ),
  },
  {
    name: "Sketch pad",
    icon: (
      <svg viewBox="0 0 32 32" className="size-8">
        <rect width="32" height="32" rx="3" fill="#d0402e" />
        <path d="m3 0 5 13 9 10 3-5-4-10-3-8M8 0l5 11 4 12M6 0l6 14" fill="none" stroke="white" strokeWidth="1.500" />
        <path d="M18 26.500h14" stroke="white" strokeWidth="1.500" />
      </svg>
    ),
  },
  {
    name: "Instagram",
    icon: (
      <svg viewBox="0 0 32 32" className="size-8">
        <defs>
          <radialGradient id="ig" cx=".25" cy="1.050" r="1.200">
            <stop offset="0" stopColor="#ffdd55" />
            <stop offset=".2" stopColor="#ffb347" />
            <stop offset=".45" stopColor="#f0413f" />
            <stop offset=".7" stopColor="#c23299" />
            <stop offset="1" stopColor="#4f5bd5" />
          </radialGradient>
        </defs>
        <rect width="32" height="32" rx="6" fill="url(#ig)" />
        <g fill="none" stroke="white" strokeWidth="2.200">
          <rect x="5" y="5" width="22" height="22" rx="6.500" />
          <circle cx="16" cy="16" r="5.200" />
        </g>
        <circle cx="22.500" cy="9.500" r="1.500" fill="white" />
      </svg>
    ),
  },
  {
    name: "Telegram",
    running: true,
    icon: (
      <span className="relative flex size-[29px] items-center justify-center rounded-full bg-gradient-to-b from-[#37aee2] to-[#1583bd] text-white">
        <FaTelegramPlane className="mr-[2px] size-[18px]" />
        <span className="absolute top-0 -right-2 h-[15px] rounded-md bg-[#f4453c] px-px text-xs leading-[15px]">..65</span>
      </span>
    ),
  },
  { name: "Photoshop", icon: <Tile bg="bg-[#001e36]" fg="text-[#31a8ff]">Ps</Tile> },
  { name: "Premiere", icon: <Tile bg="bg-[#00005b]" fg="text-[#9999ff]">Pr</Tile> },
  { name: "Illustrator", icon: <Tile bg="bg-[#330000]" fg="text-[#ff9a00]">Ai</Tile> },
  { name: "InDesign", icon: <Tile bg="bg-[#49021f]" fg="text-[#ff3366]">Id</Tile> },
  {
    name: "Figma",
    icon: (
      <svg viewBox="0 0 32 32" className="size-8">
        <rect width="32" height="32" rx="2" fill="#2a2a2e" />
        <path d="M16 5h-3.500a3.700 3.700 0 0 0 0 7.400H16z" fill="#f24e1e" />
        <path d="M16 5h3.500a3.700 3.700 0 0 1 0 7.400H16z" fill="#ff7262" />
        <path d="M16 12.400h-3.500a3.700 3.700 0 0 0 0 7.400H16z" fill="#a259ff" />
        <circle cx="19.500" cy="16.100" r="3.700" fill="#1abcfe" />
        <path d="M16 19.800h-3.500a3.500 3.500 0 1 0 3.500 3.500z" fill="#0acf83" />
      </svg>
    ),
  },
  {
    name: "Anaconda",
    icon: (
      <svg viewBox="0 0 32 32" className="size-8" fill="none" stroke="#43b02a">
        <path d="M15 2A14 14 0 1 1 10 29" strokeWidth="4" />
        <path d="M10 29A14 14 0 0 1 15 2.500" strokeWidth="3.500" strokeDasharray="2 1.200" />
      </svg>
    ),
  },
  {
    name: "Spotify",
    icon: (
      <span className="rounded-full bg-black">
        <FaSpotify className="size-8 text-[#1ed760]" />
      </span>
    ),
  },
  {
    name: "Camtasia",
    icon: (
      <svg viewBox="0 0 32 32" className="size-8">
        <rect width="32" height="32" rx="3" fill="#4aa800" />
        <path d="M0 3q0-3 3-3h26q3 0 3 3L0 14z" fill="#6cba0a" />
        <path d="M27 4.500 24.500 9H14q-2 0-2 2v10q0 2 2 2h10.500l2.500 4.500H13Q6.500 27.500 6.500 21V11Q6.500 4.500 13 4.500z" fill="white" />
      </svg>
    ),
  },
  {
    name: "CLion",
    icon: (
      <JetBrains code="CL">
        <path d="M0 16 2 5l10-5 6 2 8-2 6 7-3 6 2 7-2 12-10-3L8 32 1 24z" fill="#21d789" />
        <path d="M12 0l6 2-2 6-6-3z" fill="#ff318c" />
        <path d="M1 18v7l6 6 6-4zM31 20l-2 12-10-4z" fill="#07c3f2" />
      </JetBrains>
    ),
  },
  {
    name: "IntelliJ IDEA",
    icon: (
      <JetBrains code="IJ">
        <path d="M0 2l12-2 6 6 6-4 8 6-2 14-10 10-8-5L2 32 4 18z" fill="#fe315d" />
        <path d="M22 2l10 6-2 14-9 10-6-5 5-5V6z" fill="#087cfa" />
        <path d="M1 12l6 4-3 8z" fill="#f97a12" />
        <path d="M2 2l7 3-5 6z" fill="#ffb04a" />
      </JetBrains>
    ),
  },
  {
    name: "DataGrip",
    icon: (
      <JetBrains code="DG">
        <path d="M0 0l14 4 14-1 4 15-6 6-3 8-14-2-8-4z" fill="#9775f8" />
        <path d="M0 0l15 4-9 12 6 14-11-3z" fill="#22d88f" />
        <path d="M27 3l5 14-6 5-1-17z" fill="#e844e8" />
      </JetBrains>
    ),
  },
  {
    name: "WebStorm",
    icon: (
      <JetBrains code="WS">
        <path d="M0 3l10-3 6 3 10-3 2 6 4 12-6 5-3 9H7z" fill="#07a3f2" />
        <path d="M17 3l10-3 1 7-8 2z" fill="#fcf84a" />
        <path d="M7 25h16l-2 7-14-2z" fill="#0a60e8" />
      </JetBrains>
    ),
  },
  {
    name: "Android Studio",
    running: true,
    icon: (
      <svg viewBox="0 0 32 32" className="size-8">
        <circle cx="16" cy="16" r="15.500" fill="#f5f7f8" />
        <path d="M19 10c5 0 8.500 5 7 10l-4 2z" fill="#34c77b" />
        <path d="M16 9 10 25M16 9l6 16M8 19c4 2.500 12 2.500 16 0" fill="none" stroke="#4285f4" strokeWidth="2.600" />
        <circle cx="16" cy="9.500" r="2" fill="#f5f7f8" stroke="#2b4a65" strokeWidth="1.500" />
        <path d="M16 5v2.500" stroke="#2b4a65" strokeWidth="1.800" />
      </svg>
    ),
  },
  { name: "Kaggle", icon: <span className="flex size-8 items-center justify-center bg-[#63666a] pb-1 text-[32px] leading-8 text-[#20beff]">k</span> },
  {
    name: "Visual Studio Code",
    icon: (
      <svg viewBox="0 0 32 32" className="size-8">
        <path d="M23.500 0v9L4 24.500 0 21.500z" fill="#0f86cf" />
        <path d="M23.500 32v-9L4 7.500 0 10.500z" fill="#0b72b8" />
        <path d="M23.500 0 32 3.500v25L23.500 32 21 30V2z" fill="#29a8f2" />
      </svg>
    ),
  },
];

function Taskbar() {
  return (
    <footer className="flex h-[65px] shrink-0 items-stretch border-t border-[#4b4437] bg-[#2d2414] text-white">
      <div className="ml-[14px] grid w-[1304px] grid-cols-22 pb-[2px]">
        {apps.map((a) => (
          <button key={a.name} aria-label={a.name} className="relative flex items-center justify-center">
            {a.icon}
            {a.running && <span className="absolute bottom-[5px] h-1 w-2 rounded-full bg-[#a39f97]" />}
          </button>
        ))}
      </div>
      <span className="ml-[2px] w-px bg-[#4a4335]" />
      <button aria-label="Snipping tool" className="relative mx-[6px] my-1 flex w-[54px] items-center justify-center rounded-md bg-[#3a3223]">
        <svg viewBox="0 0 34 34" className="mb-1 size-[34px]">
          <rect x="1" y="1" width="25" height="25" rx="4" fill="#f1f3f5" />
          <path d="M4 5h15M5.500 4v15" stroke="#d83b01" strokeWidth="3.500" strokeDasharray="4 1.500" fill="none" />
          <path d="M11 9h8v12h-8z" fill="#d5dbe0" />
          <path d="M19 8v12l9 0M17 25l6-6" stroke="#9aa5ad" strokeWidth="2.500" fill="none" />
          <g fill="none" stroke="#1a8fe3" strokeWidth="2.200">
            <circle cx="29.500" cy="18" r="3" />
            <circle cx="17.500" cy="29.500" r="3" />
            <path d="m26.500 20-7 7" />
          </g>
        </svg>
        <span className="absolute bottom-0 h-1 w-[22px] rounded-full bg-[#fbca1f]" />
      </button>
      <button aria-label="More apps" className="flex w-[59px] items-center justify-center pr-1">
        <svg viewBox="0 0 22 6" className="h-[6px] w-[22px]" fill="white">
          <circle cx="3" cy="3" r="2" />
          <circle cx="11" cy="3" r="2" />
          <circle cx="19" cy="3" r="2" />
        </svg>
      </button>
      <span className="w-px bg-[#4a4335]" />
      <div className="mr-7 ml-auto flex items-center pb-[2px]">
        <svg viewBox="0 0 16 10" className="h-[10px] w-4" fill="none" stroke="white" strokeWidth="2">
          <path d="m1 9 7-7 7 7" />
        </svg>
        <svg viewBox="0 0 23 16" className="ml-6 h-4 w-[23px]" fill="none" stroke="white" strokeWidth="1.500">
          <rect x="1" y="1" width="21" height="14" rx="2" />
          <path d="M4 5h15M4 8h15" strokeDasharray="2 1.500" strokeWidth="1.700" />
          <path d="M6 11.500h11" />
        </svg>
        <span className="mt-1 ml-[23px]">ENG</span>
        <svg viewBox="0 0 22 17" className="ml-6 h-[17px] w-[22px]" fill="none" stroke="white" strokeWidth="1.600">
          <path d="M1 6.500C7 0 15 0 21 6.500M4 9.500c4-4.500 10-4.500 14 0M7 12.500c2.500-2.500 5.500-2.500 8 0" />
          <circle cx="11" cy="15" r="1.500" fill="white" stroke="none" />
        </svg>
        <svg viewBox="0 0 22 16" className="ml-[11px] h-4 w-[22px]" fill="none" stroke="white" strokeWidth="1.400">
          <path d="M1 5.500v5h3L9.500 15V1L4 5.500zM13.500 4.500l7 7M20.500 4.500l-7 7" />
        </svg>
        <svg viewBox="0 0 24 14" className="ml-[11px] h-[14px] w-6" fill="none" stroke="white" strokeWidth="1.600">
          <rect x="1" y="1" width="19" height="12" rx="3" />
          <path d="M22.500 5v4" strokeWidth="2" />
          <rect x="4" y="4" width="9" height="6" fill="white" />
        </svg>
        <div className="ml-[18px] w-[77px] text-right text-base leading-[22px] whitespace-nowrap">
          <div>11:35 AM</div>
          <div>3/11/2024</div>
        </div>
        <Bell className="ml-3 h-5 w-[18px]" />
      </div>
    </footer>
  );
}

/* Edge of the desktop wallpaper under the taskbar */
function WallpaperEdge() {
  return (
    <div className="flex h-px shrink-0 bg-[#3a3a38]">
      <span className="ml-[110px] w-[430px] bg-[#a87a08]" />
      <span className="w-[60px] bg-[#8a8a80]" />
      <span className="w-[70px] bg-[#e4eaf0]" />
      <span className="w-[90px] bg-[#6b5a30]" />
      <span className="w-[120px] bg-[#8f5f08]" />
      <span className="w-[284px] bg-[#8f6a18]" />
      <span className="w-[164px] bg-[#e4eaf0]" />
      <span className="w-[442px] bg-[#a87a08]" />
    </div>
  );
}

export default function App() {
  return (
    <div className="flex min-h-screen w-full flex-col overflow-hidden bg-[#1d2023] font-['Open_Sans',sans-serif] text-[15px] leading-5 text-[#bdbfc1]">
      <TitleBar />
      <ToolbarSliver />
      <div className="flex flex-1">
        <LeftStripe />
        <div className="flex min-w-0 flex-1 flex-col">
          <EditorHeader />
          <div className="flex flex-1">
            <Palette />
            <Surface />
            <Attributes />
          </div>
          <nav className="flex h-[31px] shrink-0 items-center gap-[13px] border-t border-[#3a3d3f] pl-[13px]">
            <span className="text-[#4fa84f]">LinearLayout</span>
            <span className="text-[#77797c]">›</span>
            <span className="text-[#a9a94b]">LinearLayout</span>
            <span className="text-[#77797c]">›</span>
            <span className="text-[#a84f4f]">TextView</span>
          </nav>
        </div>
        <RightStripe />
      </div>
      <StatusBar />
      <Taskbar />
      <WallpaperEdge />
    </div>
  );
}
